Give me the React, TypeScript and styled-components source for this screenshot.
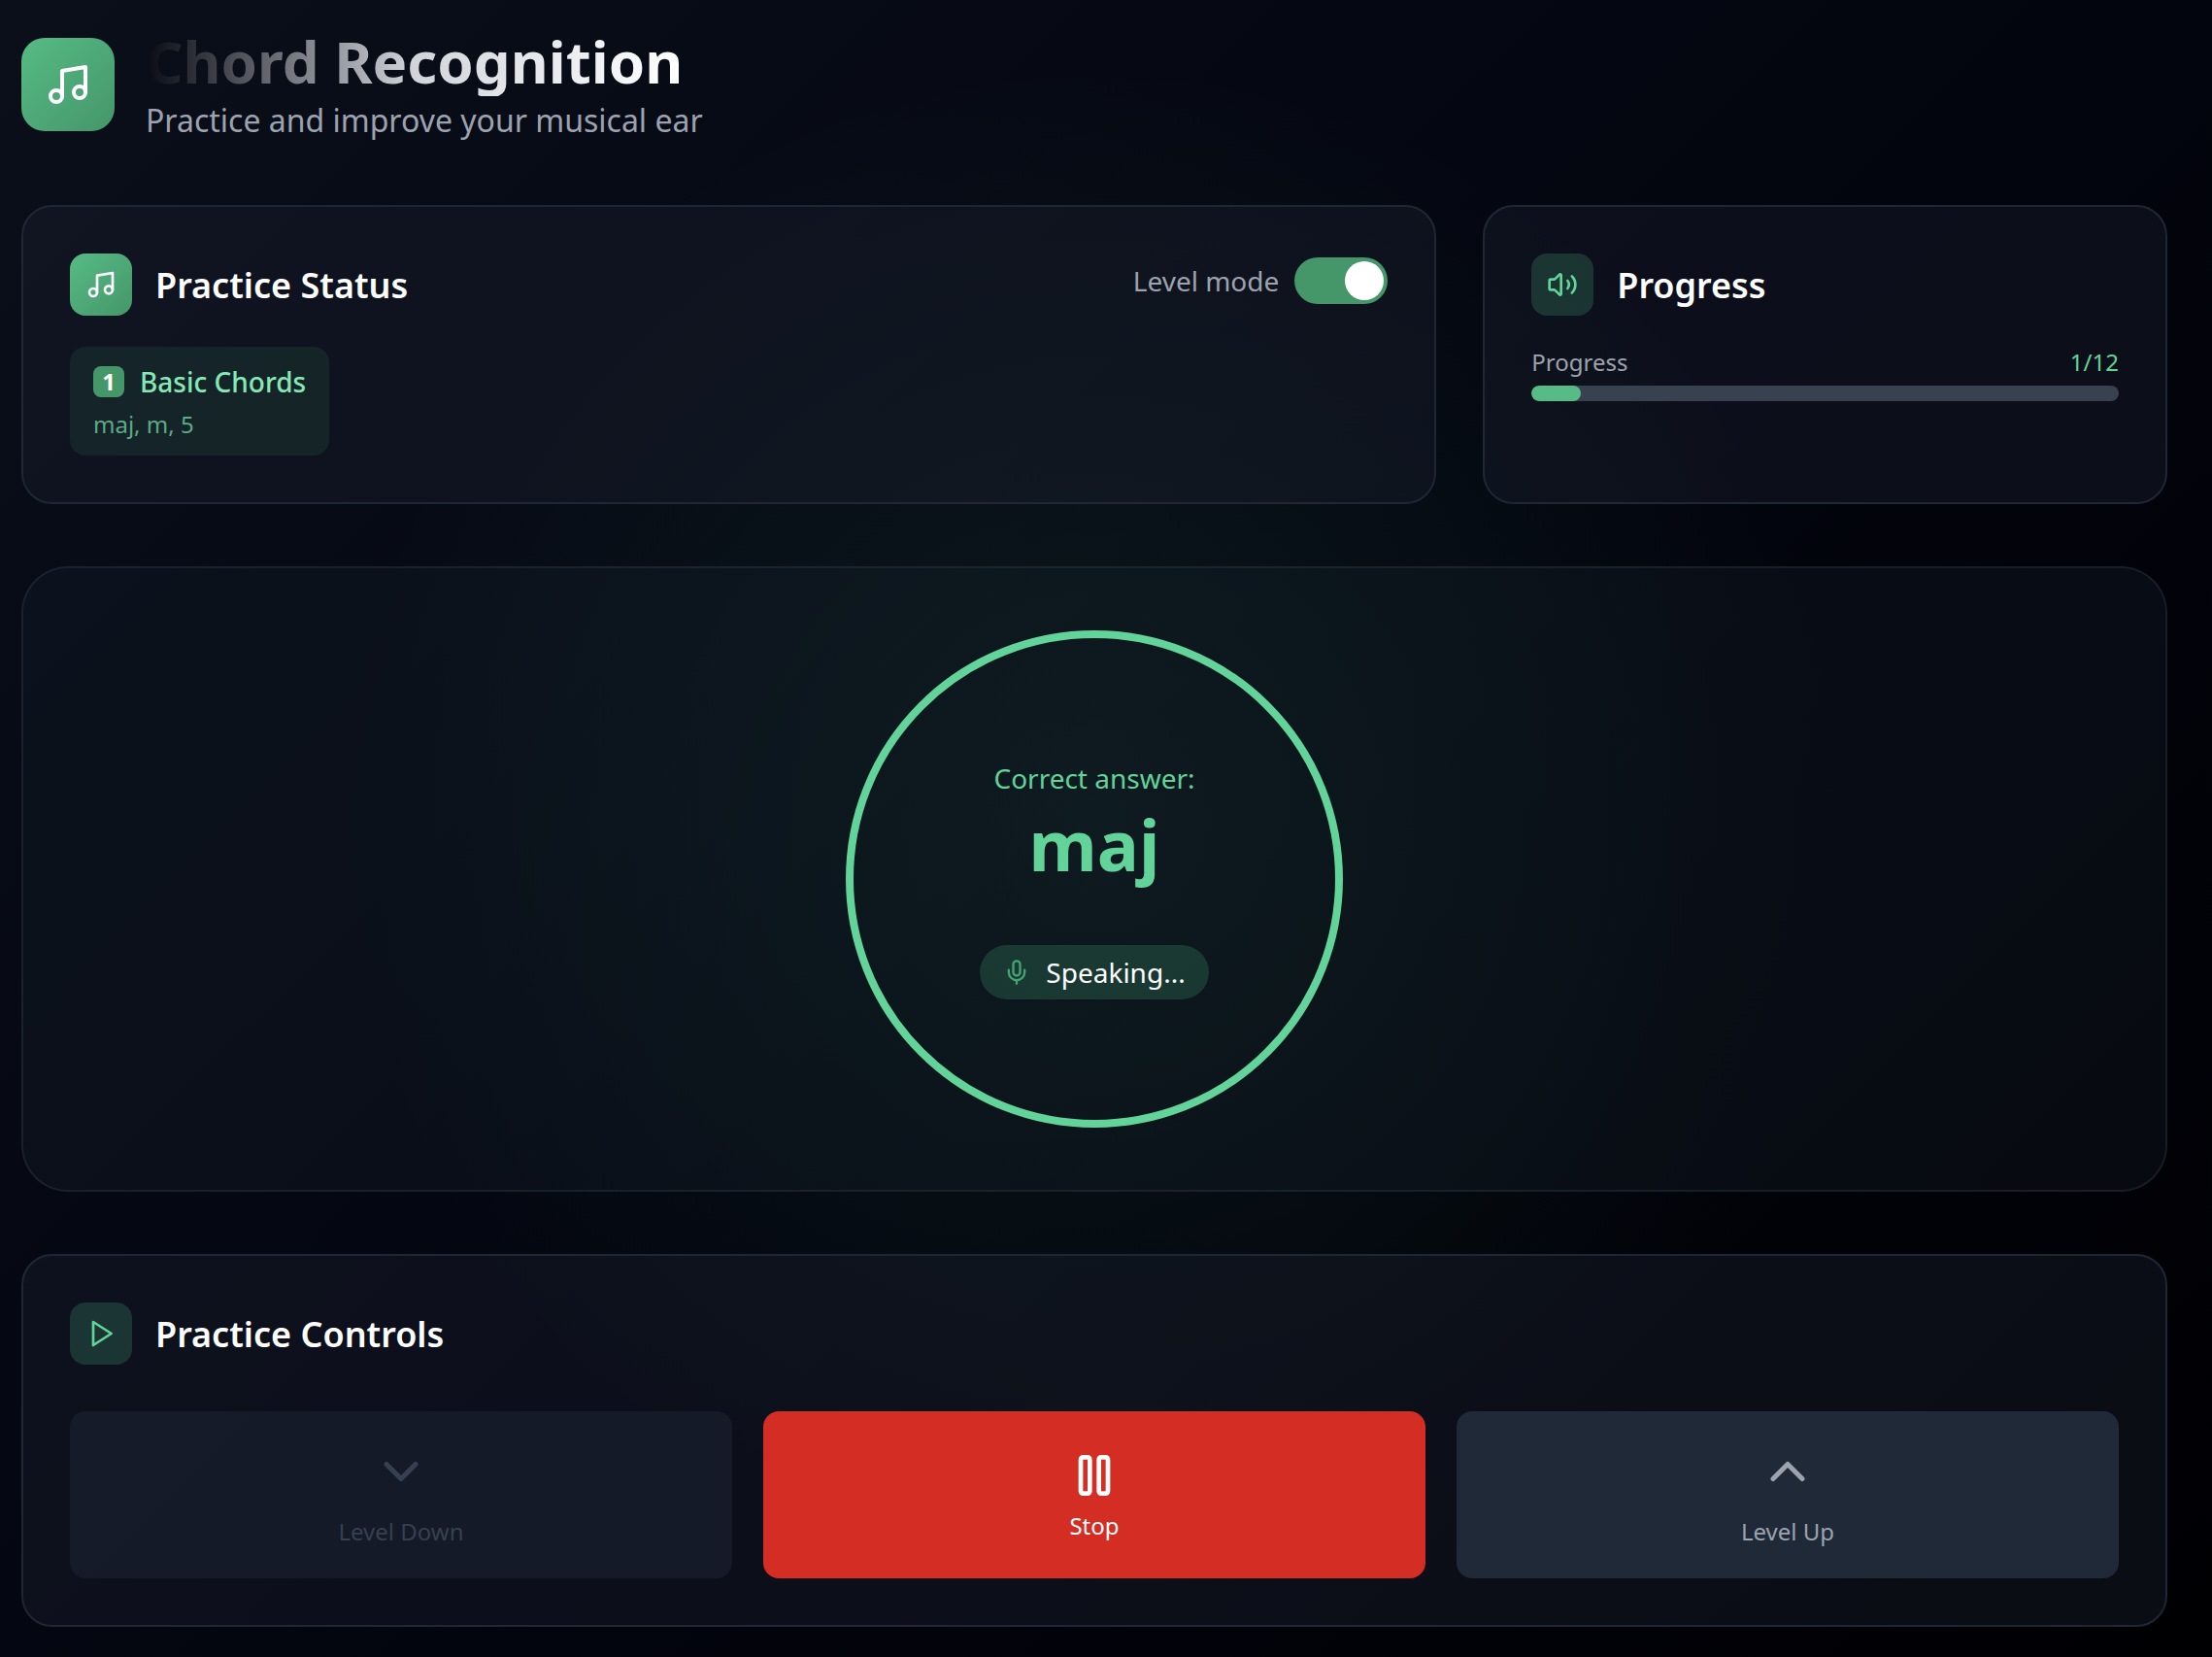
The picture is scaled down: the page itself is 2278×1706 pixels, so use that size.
import React from "react";
import styled, { createGlobalStyle, css } from "styled-components";

const GlobalStyle = createGlobalStyle`
  *, *::before, *::after { box-sizing: border-box; }
  html, body { margin: 0; padding: 0; background: #000; }
  body { font-family: "Noto Sans", sans-serif; color: #fff; }
`;

const Page = styled.main`
  width: 2278px;
  height: 1706px;
  overflow: hidden;
  padding: 27px 46px 0 22px;
  display: flex;
  flex-direction: column;
  gap: 64px;
  background:
    radial-gradient(circle 780px at 1127px 845px, rgba(72, 187, 130, 0.105), rgba(72, 187, 130, 0) 100%),
    linear-gradient(135deg, #0a0f1a 0%, #03050f 50%, #000003 100%);
`;

const Header = styled.header`
  display: flex;
  align-items: center;
  gap: 32px;
  height: 120px;
`;

const gradientFill = css`
  background: linear-gradient(135deg, #56bb85, #459669);
  color: #fff;
`;

const Logo = styled.div`
  ${gradientFill}
  width: 96px;
  height: 96px;
  border-radius: 24px;
  display: grid;
  place-items: center;
`;

const Title = styled.h1`
  margin: 0;
  width: fit-content;
  font-size: 60px;
  line-height: 72px;
  font-weight: 700;
  color: transparent;
  background: linear-gradient(90deg, #090b15 0%, #d1d5db 50%, #ffffff 100%);
  background-clip: text;
  -webkit-background-clip: text;
`;

const Subtitle = styled.p`
  margin: 0;
  font-size: 32px;
  line-height: 50px;
  height: 48px;
  color: #9ca3af;
`;

const TopGrid = styled.div`
  display: grid;
  grid-template-columns: repeat(3, 1fr);
  gap: 48px;
`;

const Card = styled.section<{ $span?: number }>`
  grid-column: span ${(p) => p.$span ?? 1};
  padding: 48px;
  border: 2px solid #202734;
  border-radius: 32px;
  background: rgba(26, 32, 45, 0.42);
`;

const CardHeader = styled.div`
  display: flex;
  justify-content: space-between;
  align-items: flex-start;
`;

const Heading = styled.div`
  display: flex;
  align-items: center;
  gap: 24px;
`;

const HeadingIcon = styled.div<{ $solid?: boolean }>`
  width: 64px;
  height: 64px;
  border-radius: 16px;
  display: grid;
  place-items: center;
  background: rgba(85, 200, 145, 0.2);
  color: #62d399;
  ${(p) => p.$solid && gradientFill}
`;

const HeadingText = styled.h2`
  margin: 0;
  padding-top: 2px;
  font-size: 36px;
  line-height: 56px;
  font-weight: 600;
`;

const ModeSwitch = styled.div`
  display: flex;
  align-items: center;
  gap: 16px;
  margin-top: 4px;
  font-size: 28px;
  line-height: 40px;
  color: #9ca3af;
`;

const Track = styled.div`
  display: flex;
  justify-content: flex-end;
  width: 96px;
  height: 48px;
  padding: 4px;
  border-radius: 24px;
  background: #459669;
`;

const Knob = styled.div`
  width: 40px;
  height: 40px;
  border-radius: 50%;
  background: #fff;
`;

const LevelBadge = styled.div`
  width: fit-content;
  margin-top: 32px;
  padding: 16px 24px;
  border-radius: 16px;
  background: rgba(72, 187, 120, 0.1);
`;

const LevelName = styled.div`
  display: flex;
  align-items: center;
  gap: 16px;
  font-size: 28px;
  line-height: 40px;
  font-weight: 500;
  color: #86e8b5;
`;

const LevelNumber = styled.span`
  width: 32px;
  height: 32px;
  border-radius: 8px;
  background: #459669;
  color: #fff;
  font-size: 24px;
  line-height: 32px;
  font-weight: 700;
  text-align: center;
`;

const LevelChords = styled.div`
  margin-top: 8px;
  font-size: 24px;
  line-height: 32px;
  color: #5eaa86;
`;

const ProgressLabels = styled.div`
  display: flex;
  justify-content: space-between;
  margin-top: 32px;
  font-size: 24px;
  line-height: 32px;
  color: #9ca3af;
`;

const ProgressCount = styled.span`
  color: #62d399;
`;

const ProgressTrack = styled.div`
  margin-top: 8px;
  height: 16px;
  border-radius: 8px;
  overflow: hidden;
  background: #384150;
`;

const ProgressFill = styled.div`
  height: 100%;
  border-radius: 8px;
  background: #56bb85;
`;

const Stage = styled.section`
  display: flex;
  justify-content: center;
  padding: 64px;
  border: 2px solid rgba(65, 75, 92, 0.28);
  border-radius: 48px;
  background: rgba(24, 34, 45, 0.29);
`;

const Ring = styled.div`
  width: 512px;
  height: 512px;
  border: 8px solid #62d399;
  border-radius: 50%;
  display: flex;
  flex-direction: column;
  align-items: center;
  justify-content: center;
  color: #62d399;
`;

const AnswerLabel = styled.div`
  font-size: 28px;
  line-height: 40px;
`;

const Answer = styled.div`
  margin-top: 8px;
  font-size: 72px;
  line-height: 80px;
  font-weight: 700;
`;

const SpeakingPill = styled.div`
  display: flex;
  align-items: center;
  gap: 16px;
  margin-top: 64px;
  padding: 8px 24px;
  border-radius: 28px;
  background: rgba(80, 190, 135, 0.2);
  color: #fff;
  font-size: 28px;
  line-height: 40px;

  svg { color: #46a374; }
`;

const Buttons = styled.div`
  display: grid;
  grid-template-columns: repeat(3, 1fr);
  gap: 32px;
  margin-top: 48px;
`;

const tones = {
  muted: css`background: rgba(31, 41, 55, 0.45); color: #374050;`,
  danger: css`background: #d42d24; color: #fff;`,
  normal: css`background: #202938; color: #9ca3af;`,
};

const ControlButton = styled.button<{ $tone: keyof typeof tones; $gap: number }>`
  height: 172px;
  padding: 0;
  border: 0;
  border-radius: 16px;
  display: flex;
  flex-direction: column;
  align-items: center;
  justify-content: center;
  gap: ${(p) => p.$gap}px;
  font-family: inherit;
  font-size: 24px;
  line-height: 32px;
  ${(p) => tones[p.$tone]}
`;

type IconProps = { size: number; stroke?: number; children: React.ReactNode };

const Icon = ({ size, stroke = 2, children }: IconProps) => (
  <svg
    width={size}
    height={size}
    viewBox="0 0 24 24"
    fill="none"
    stroke="currentColor"
    strokeWidth={stroke}
    strokeLinecap="round"
    strokeLinejoin="round"
  >
    {children}
  </svg>
);

const MusicIcon = ({ size }: { size: number }) => (
  <Icon size={size}>
    <path d="M9 18V5l12-2v13" />
    <circle cx="6" cy="18" r="3" />
    <circle cx="18" cy="16" r="3" />
  </Icon>
);

const VolumeIcon = () => (
  <Icon size={32}>
    <path d="M11 4.702a.705.705 0 0 0-1.203-.498L6.413 7.587A1.4 1.4 0 0 1 5.416 8H3a1 1 0 0 0-1 1v6a1 1 0 0 0 1 1h2.416a1.4 1.4 0 0 1 .997.413l3.383 3.384A.705.705 0 0 0 11 19.298z" />
    <path d="M16 9a5 5 0 0 1 0 6" />
    <path d="M19.364 18.364a9 9 0 0 0 0-12.728" />
  </Icon>
);

const PlayIcon = () => (
  <Icon size={32}>
    <polygon points="6 3 20 12 6 21 6 3" />
  </Icon>
);

const MicIcon = () => (
  <Icon size={28}>
    <path d="M12 2a3 3 0 0 0-3 3v7a3 3 0 0 0 6 0V5a3 3 0 0 0-3-3Z" />
    <path d="M19 10v2a7 7 0 0 1-14 0v-2" />
    <path d="M12 19v3" />
  </Icon>
);

const PauseIcon = () => (
  <Icon size={56}>
    <rect x="14" y="4" width="4" height="16" rx="1" />
    <rect x="6" y="4" width="4" height="16" rx="1" />
  </Icon>
);

const solved = 1;
const total = 12;

export default function App() {
  return (
    <>
      <GlobalStyle />
      <Page>
        <Header>
          <Logo>
            <MusicIcon size={48} />
          </Logo>
          <div>
            <Title>Chord Recognition</Title>
            <Subtitle>Practice and improve your musical ear</Subtitle>
          </div>
        </Header>

        <TopGrid>
          <Card $span={2}>
            <CardHeader>
              <Heading>
                <HeadingIcon $solid>
                  <MusicIcon size={32} />
                </HeadingIcon>
                <HeadingText>Practice Status</HeadingText>
              </Heading>
              <ModeSwitch>
                Level mode
                <Track>
                  <Knob />
                </Track>
              </ModeSwitch>
            </CardHeader>
            <LevelBadge>
              <LevelName>
                <LevelNumber>1</LevelNumber>
                Basic Chords
              </LevelName>
              <LevelChords>maj, m, 5</LevelChords>
            </LevelBadge>
          </Card>

          <Card>
            <Heading>
              <HeadingIcon>
                <VolumeIcon />
              </HeadingIcon>
              <HeadingText>Progress</HeadingText>
            </Heading>
            <ProgressLabels>
              <span>Progress</span>
              <ProgressCount>
                {solved}/{total}
              </ProgressCount>
            </ProgressLabels>
            <ProgressTrack>
              <ProgressFill style={{ width: `${(solved / total) * 100}%` }} />
            </ProgressTrack>
          </Card>
        </TopGrid>

        <Stage>
          <Ring>
            <AnswerLabel>Correct answer:</AnswerLabel>
            <Answer>maj</Answer>
            <SpeakingPill>
              <MicIcon />
              Speaking...
            </SpeakingPill>
          </Ring>
        </Stage>

        <Card>
          <Heading>
            <HeadingIcon>
              <PlayIcon />
            </HeadingIcon>
            <HeadingText>Practice Controls</HeadingText>
          </Heading>
          <Buttons>
            <ControlButton $tone="muted" $gap={16}>
              <Icon size={60}>
                <path d="m6 9 6 6 6-6" />
              </Icon>
              Level Down
            </ControlButton>
            <ControlButton $tone="danger" $gap={8}>
              <PauseIcon />
              Stop
            </ControlButton>
            <ControlButton $tone="normal" $gap={16}>
              <Icon size={60}>
                <path d="m18 15-6-6-6 6" />
              </Icon>
              Level Up
            </ControlButton>
          </Buttons>
        </Card>
      </Page>
    </>
  );
}
